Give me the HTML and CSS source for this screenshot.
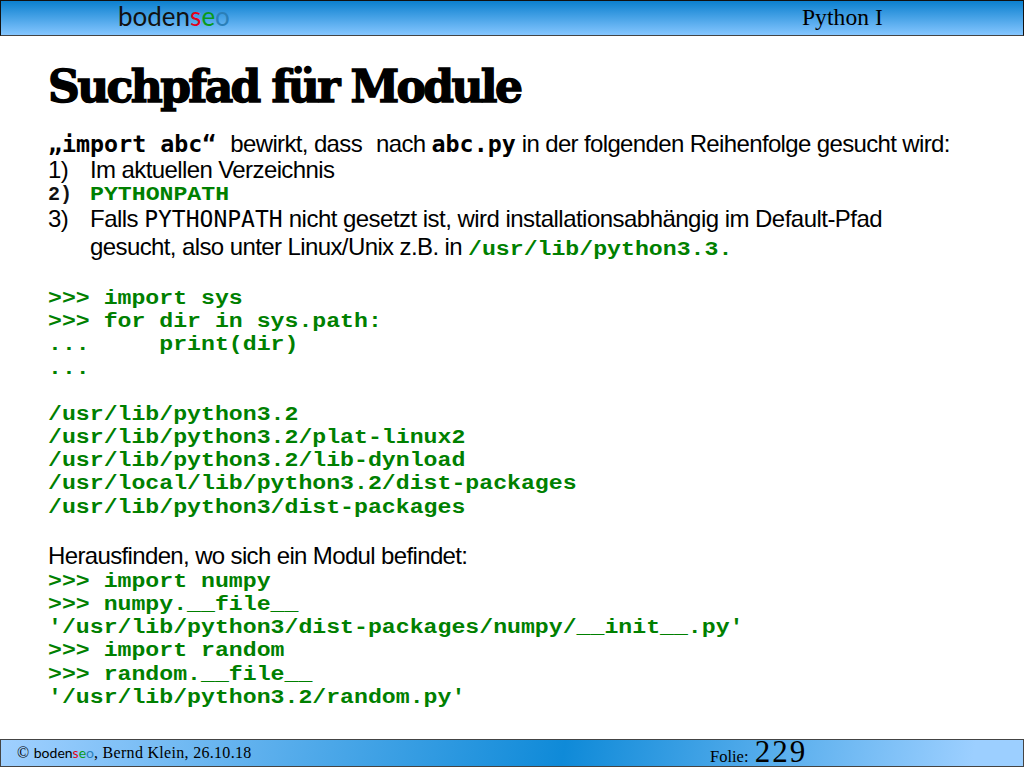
FILE: index.html
```html
<!DOCTYPE html>
<html lang="de">
<head>
<meta charset="utf-8">
<title>Suchpfad für Module</title>
<link rel="stylesheet" href="styles.css">
</head>
<body>
<div class="slide">
  <header class="top">
    <div class="logo">boden<span class="red">s</span><span class="green">e</span><span class="blue">o</span></div>
    <div class="course">Python I</div>
  </header>
  <main class="content">
    <h1>Suchpfad für Module</h1>
    <p class="line intro"><b class="mono">„import abc“</b><span class="gap1">bewirkt, dass</span><span class="gap2">nach</span> <b class="mono">abc.py</b> in der folgenden Reihenfolge gesucht wird:</p>
    <div class="item"><span class="num">1)</span><span>Im aktuellen Verzeichnis</span></div>
    <div class="item small"><span class="code dark">2)</span><span class="code">PYTHONPATH</span></div>
    <div class="item wider"><span class="num">3)</span><span>Falls <span class="tt">PYTHONPATH</span> nicht gesetzt ist, wird installationsabhängig im Default-Pfad</span></div>
    <div class="item last"><span class="num"></span><span>gesucht, also unter Linux/Unix z.B. in <span class="code">/usr/lib/python3.3.</span></span></div>
    <pre class="code block first">&gt;&gt;&gt; import sys
&gt;&gt;&gt; for dir in sys.path:
...     print(dir)
...</pre>
    <pre class="code block second">/usr/lib/python3.2
/usr/lib/python3.2/plat-linux2
/usr/lib/python3.2/lib-dynload
/usr/local/lib/python3.2/dist-packages
/usr/lib/python3/dist-packages</pre>
    <p class="line find">Herausfinden, wo sich ein Modul befindet:</p>
    <pre class="code block">&gt;&gt;&gt; import numpy
&gt;&gt;&gt; numpy.__file__
'/usr/lib/python3/dist-packages/numpy/__init__.py'
&gt;&gt;&gt; import random
&gt;&gt;&gt; random.__file__
'/usr/lib/python3.2/random.py'</pre>
  </main>
  <footer class="bottom">
    <div class="credit">© <span class="mini">boden<span class="red">s</span><span class="green">e</span><span class="blue">o</span></span>, Bernd Klein, 26.10.18</div>
    <div class="folie">Folie: <span class="page">229</span></div>
  </footer>
</div>
</body>
</html>
```
FILE: styles.css
```css
* { box-sizing: border-box; }
html, body { margin: 0; padding: 0; background: #fff; }
.slide { width: 1024px; height: 768px; display: flex; flex-direction: column; overflow: hidden; color: #000; font-family: "Liberation Sans", sans-serif; }
.top { height: 36px; flex: none; display: flex; align-items: center; justify-content: space-between; padding: 0 140px 2px 117px; border: 1px solid #111; border-bottom-color: #444; background: linear-gradient(#0b80cf, #85c6ff); }
.logo { font-family: Lato, sans-serif; font-size: 26px; line-height: 30px; letter-spacing: 0; color: #111; margin-top: -3px; }
.red { color: #e2001a; }
.green { color: #0a9a1a; }
.blue { color: #2a7fb8; }
.course { font-family: "Liberation Serif", serif; font-size: 23.5px; letter-spacing: .1px; }
.content { flex: 1; padding: 0 0 0 48px; }
h1 { margin: 23px 0 0; font-family: "DejaVu Serif", serif; font-weight: 700; font-size: 44px; line-height: 56px; letter-spacing: -2.6px; height: 56px; -webkit-text-stroke: 1.4px #000; }
.line, .item { margin: 0; font-size: 24px; line-height: 26px; letter-spacing: -.6px; white-space: nowrap; }
.intro, .find { letter-spacing: -.64px; }
.intro { margin-top: 16px; }
.mono { font-family: "DejaVu Sans Mono", monospace; font-size: 23.3px; letter-spacing: 0; font-weight: 700; }
.gap1, .gap2 { margin-left: 14px; }
.item { display: flex; height: 26px; }
.wider { letter-spacing: -.53px; margin-top: -1px; }
.last { margin-top: 2px; }
.num { width: 42px; flex: none; }
.small { line-height: 24px; height: 24px; }
.tt { font-family: "DejaVu Sans Mono", monospace; font-size: 23px; letter-spacing: 0; }
.code { display: inline-block; font-family: "Liberation Mono", monospace; font-weight: 700; color: #008000; font-size: 20px; letter-spacing: 0; transform: scaleX(1.159); transform-origin: left center; }
.dark { color: #111; width: 42px; transform: none; }
.block { display: block; margin: 0; line-height: 23.2px; }
.first { margin-top: 27px; }
.second { margin-top: 23px; }
.find { margin-top: 23px; margin-bottom: 1px; line-height: 27px; }
.bottom { height: 28px; flex: none; margin-bottom: 1px; display: flex; align-items: center; padding: 0 0 0 16px; border: 1px solid #444; background: linear-gradient(100deg, #a0d0ff 0%, #0f8ad8 55%, #9ccfff 95%); font-family: "Liberation Serif", serif; }
.credit { width: 693px; font-size: 16px; letter-spacing: .3px; }
.mini { font-family: Lato, sans-serif; font-size: 14px; letter-spacing: 0; }
.folie { font-size: 16.5px; }
.page { font-size: 31px; line-height: 24px; letter-spacing: 2px; margin-left: 2px; }
```
